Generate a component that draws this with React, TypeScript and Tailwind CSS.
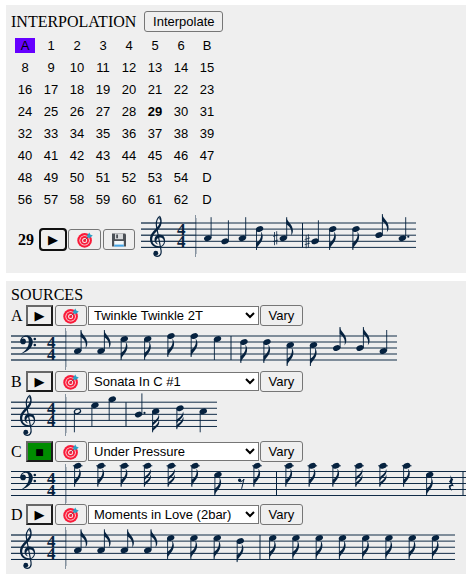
import React, { useState } from 'react';
import { clsx } from 'clsx';

type Clef = 'treble' | 'bass';
type NoteKind = 'half' | 'quarter' | 'eighth' | 'sixteenth';

interface NoteData {
  x: number;
  y: number;
  kind: NoteKind;
  up?: boolean;
  sharp?: boolean;
  dot?: boolean;
}

interface Rest {
  x: number;
  kind: 'eighth' | 'quarter';
}

interface Score {
  label: string;
  clef: Clef;
  width: number;
  height: number;
  bars: number[];
  notes: NoteData[];
  rests?: Rest[];
  top?: number;
  spacing?: number;
}

const INK = '#06223f';
const STEM = 21;

const run = (xs: number[], y: number, kind: NoteKind, up = false): NoteData[] =>
  xs.map((x) => ({ x, y, kind, up }));

const melody: Score = {
  label: 'Interpolated melody 29',
  clef: 'treble',
  width: 275,
  height: 44,
  top: 8,
  spacing: 6.1,
  bars: [161.5],
  notes: [
    { x: 66.7, y: 23.2, kind: 'quarter', up: true },
    { x: 84, y: 26.3, kind: 'quarter', up: true },
    { x: 101.3, y: 23.2, kind: 'quarter', up: true },
    { x: 118.6, y: 14, kind: 'eighth' },
    { x: 142.3, y: 23.2, kind: 'eighth', up: true, sharp: true },
    { x: 174, y: 26.3, kind: 'quarter', up: true, sharp: true },
    { x: 191.7, y: 14, kind: 'eighth' },
    { x: 215, y: 14, kind: 'eighth' },
    { x: 238, y: 20.1, kind: 'eighth', up: true },
    { x: 261.3, y: 23.2, kind: 'quarter', up: true, dot: true },
  ],
};

interface Source {
  id: string;
  title: string;
  playing?: boolean;
  score: Score;
}

const sources: Source[] = [
  {
    id: 'A',
    title: 'Twinkle Twinkle 2T',
    score: {
      label: 'Source A melody',
      clef: 'bass',
      width: 386,
      height: 43,
      bars: [220],
      notes: [
        ...run([66.7, 90], 23, 'eighth', true),
        ...run([113.3, 136.7], 11, 'eighth'),
        ...run([160, 183.3], 8, 'eighth'),
        { x: 206.5, y: 11, kind: 'quarter' },
        ...run([233, 256], 14, 'eighth'),
        ...run([279.3, 302.5], 17, 'eighth'),
        ...run([325.7, 349], 20, 'eighth', true),
        { x: 372.3, y: 23, kind: 'quarter', up: true },
      ],
    },
  },
  {
    id: 'B',
    title: 'Sonata In C #1',
    score: {
      label: 'Source B melody',
      clef: 'treble',
      width: 206,
      height: 47,
      top: 8.2,
      spacing: 6.07,
      bars: [115],
      notes: [
        { x: 66.5, y: 17.3, kind: 'half' },
        { x: 84, y: 11.2, kind: 'quarter' },
        { x: 101.3, y: 5.2, kind: 'quarter' },
        { x: 127.5, y: 20.4, kind: 'quarter', up: true, dot: true },
        { x: 144.7, y: 17.3, kind: 'sixteenth' },
        { x: 169, y: 14.2, kind: 'sixteenth' },
        { x: 192.3, y: 17.3, kind: 'quarter' },
      ],
    },
  },
  {
    id: 'C',
    title: 'Under Pressure',
    playing: true,
    score: {
      label: 'Source C melody',
      clef: 'bass',
      width: 468,
      height: 40,
      top: 7.5,
      spacing: 6,
      bars: [265.5, 452],
      notes: [
        ...run([66.7, 90, 113.3], 1.8, 'eighth'),
        ...run([136.5, 160.3], 1.8, 'sixteenth'),
        ...run([184], 1.8, 'eighth'),
        ...run([207], 10.7, 'eighth'),
        ...run([246, 278, 301.3, 325], 1.8, 'eighth'),
        ...run([348, 372], 1.8, 'sixteenth'),
        ...run([395.7], 1.8, 'eighth'),
        ...run([418.7], 10.7, 'eighth'),
      ],
      rests: [
        { x: 230, kind: 'eighth' },
        { x: 440, kind: 'quarter' },
      ],
    },
  },
  {
    id: 'D',
    title: 'Moments in Love (2bar)',
    score: {
      label: 'Source D melody',
      clef: 'treble',
      width: 444,
      height: 47,
      top: 8,
      spacing: 6.12,
      bars: [249],
      notes: [
        ...run([66.7, 90, 113.3, 136.7], 23.3, 'eighth', true),
        ...run([159.7, 183, 206.3], 11, 'eighth'),
        ...run([229.3], 14.1, 'eighth'),
        ...run([261.7, 285, 308.3, 331.5, 354.8, 378, 401.3, 424.5], 11, 'eighth'),
      ],
    },
  },
];

const TrebleClef = () => (
  <g>
    <path
      fill={INK}
      d="M18.6 .6C20.2 2 21 5 20.6 8C20.1 12 17.5 14.5 14.8 17.2C12.4 19.6 11 22 11.2 25C11.5 29 14.5 31.2 18 31.2C21.3 31.2 23 28.8 22.9 26.4C22.8 23.8 20.8 22.3 18.8 22.5C16.4 22.7 15 24.8 15.4 26.8C15.6 28 16.4 28.9 17.4 29.4C15.2 29 13.4 27.2 13.5 24.7C13.6 21.6 16 19.6 18.6 19.6C22 19.6 24.2 22.4 24.1 26C24 29.8 21.2 32.6 17.4 32.6C12.6 32.6 9 29 9 24.2C9 20 11.4 17.4 14 14.6C16.6 11.8 18.9 9.6 19.2 6.6C19.3 5 18.9 4.2 18.3 4.2Z"
    />
    <path
      fill="none"
      stroke={INK}
      strokeWidth="1.2"
      d="M18.6 1.4C16 3.6 14.9 8 15.6 11.8L20 35C20.7 39 19 41.3 16.4 41.3C14.8 41.3 13.4 40.4 13 39"
    />
    <circle cx="14.8" cy="38.2" r="2.4" fill={INK} />
  </g>
);

const BassClef = () => (
  <g fill={INK}>
    <path d="M9.2 13.2C9.6 9.8 12.2 7.6 15.4 7.6C19.2 7.6 21.8 10.2 21.8 13.8C21.8 19.6 16.6 24 9.6 26C14.6 23 17.8 19 17.8 13.8C17.8 10.6 16.8 8.8 14.6 8.8C12.4 8.8 10.6 10.6 10.6 12Z" />
    <circle cx="12.1" cy="13.4" r="2.8" />
    <circle cx="23.8" cy="11" r="1.3" />
    <circle cx="23.8" cy="17" r="1.3" />
  </g>
);

const Note = ({ x, y, kind, up, sharp, dot }: NoteData) => {
  const stemX = up ? x + 3.4 : x - 3.1;
  const stemEnd = up ? y - STEM : y + STEM;
  return (
    <g>
      {y < 4 && <path d={`M${x - 4.8} ${y}h9.6`} stroke={INK} strokeWidth="1" />}
      <ellipse
        cx={x}
        cy={y}
        rx={kind === 'half' ? 3.2 : 3.8}
        ry={kind === 'half' ? 2.2 : 2.7}
        transform={`rotate(-22 ${x} ${y})`}
        fill={kind === 'half' ? 'none' : INK}
        stroke={kind === 'half' ? INK : 'none'}
        strokeWidth="1.2"
      />
      <path d={`M${stemX} ${y}V${stemEnd}`} stroke={INK} strokeWidth="0.9" />
      {kind === 'eighth' && (
        <path
          transform={`translate(${stemX} ${stemEnd}) scale(1 ${up ? 1 : -1})`}
          fill={INK}
          d="M-.4 0C.6 4.5 6.4 7.5 6.2 13.5C6.1 15.5 5.4 17 4.4 18.4C5.4 14.5 4.6 10 -.4 7Z"
        />
      )}
      {kind === 'sixteenth' &&
        [0, 5.4].map((shift) => (
          <path
            key={shift}
            transform={`translate(${stemX} ${stemEnd - shift})`}
            fill={INK}
            d="M-.4 0C.6 -3.4 6.8 -5.4 6.6 -10.4C6.6 -11 6.4 -11.8 6.2 -12.4C5.6 -8.4 2.6 -6.4 -.4 -4.2Z"
          />
        ))}
      {sharp && (
        <path
          transform={`translate(${x - 7.7} ${y})`}
          fill="none"
          stroke={INK}
          strokeWidth="0.8"
          d="M-1.1 -6.2V7M1.1 -7V6.2M-2.6 -1.8L2.6 -3.4M-2.6 3.4L2.6 1.8"
        />
      )}
      {dot && <circle cx={x + 6} cy={y - 1.5} r="1.1" fill={INK} />}
    </g>
  );
};

const RestMark = ({ x, kind }: Rest) =>
  kind === 'eighth' ? (
    <g>
      <circle cx={x - 1.4} cy="16.2" r="1.6" fill={INK} />
      <path
        d={`M${x - 2} 17.4C${x} 18.4 ${x + 2} 17 ${x + 3} 15L${x + 0.6} 24.8`}
        fill="none"
        stroke={INK}
        strokeWidth="1"
      />
    </g>
  ) : (
    <path
      transform={`translate(${x} 11)`}
      fill={INK}
      d="M-1.2 0L2.2 4.6C.6 6.6 .8 8 2.8 11.2C.4 10.4 -.8 11.2 -.4 12.6C-.2 13.8 .4 14.8 1.2 16C-1.4 14.6 -2.8 12.4 -2 10.8C-1.6 9.8 -.6 9.6 .8 10L-2 6.4C0 4.4 .2 2.6 -1.2 0Z"
    />
  );

const Staff = ({ label, clef, width, height, bars, notes, rests = [], top = 8, spacing = 6 }: Score) => {
  const bottom = top + spacing * 4;
  return (
    <svg width={width} height={height} className="block shrink-0 overflow-visible" role="img" aria-label={label}>
      {[0, 1, 2, 3, 4].map((i) => (
        <g key={i} stroke={INK}>
          <path d={`M0 ${top + spacing * i}H${width}`} opacity="0.95" />
          <path d={`M0 ${top + spacing * i}H55`} opacity="0.5" />
        </g>
      ))}
      <path d="M54.5 0V42" stroke={INK} opacity="0.45" />
      <path d="M55.5 3V39" stroke={INK} opacity="0.25" />
      {clef === 'treble' ? <TrebleClef /> : <BassClef />}
      <g fill={INK} className="font-['Liberation_Serif',serif] text-[17px] font-bold">
        <text x="36" y="20">4</text>
        <text x="36" y="32">4</text>
      </g>
      {bars.map((x) => (
        <path key={x} d={`M${x} ${top}V${bottom}`} stroke={INK} strokeWidth="1" />
      ))}
      {notes.map((note) => (
        <Note key={note.x} {...note} />
      ))}
      {rests.map((rest) => (
        <RestMark key={rest.x} {...rest} />
      ))}
    </svg>
  );
};

const TargetIcon = () => (
  <svg width="16" height="16" viewBox="0 0 16 16" aria-hidden="true">
    <circle cx="7.6" cy="8.4" r="7.3" fill="#fa1a38" />
    <circle cx="7.6" cy="8.4" r="5.2" fill="#f7e9ea" />
    <circle cx="7.6" cy="8.4" r="4.4" fill="#fa1a38" />
    <circle cx="7.6" cy="8.4" r="2.5" fill="#f7e9ea" />
    <circle cx="7.6" cy="8.4" r="1.5" fill="#fa1a38" />
    <path d="M7.6 8.4L12 4" stroke="#7d4a58" strokeWidth="0.9" />
    <path d="M10 3.6L12.4 .4L13.2 2.6L15.8 3.4L12.8 6L10.6 5.6Z" fill="#2d9fc4" />
  </svg>
);

const SaveIcon = () => (
  <svg width="16" height="16" viewBox="0 0 16 16" aria-hidden="true">
    <path d="M1 1.6H14.2L15 2.4V14.6H1Z" fill="#4c5157" />
    <path d="M4 1.6H12V7.2H4Z" fill="#d8dadc" />
    <path d="M5.2 2.4H7V6.2H5.2Z" fill="#4c5157" />
    <path d="M3.2 9H12.8V14.6H3.2Z" fill="#f4f8fa" />
    <path d="M3.2 12.6H12.8V14.6H3.2Z" fill="#45a5e6" />
  </svg>
);

interface ToolButtonProps {
  label?: string;
  className?: string;
  onClick?: () => void;
  children: React.ReactNode;
}

const ToolButton = ({ label, className, onClick, children }: ToolButtonProps) => (
  <button
    type="button"
    aria-label={label}
    onClick={onClick}
    className={clsx(
      'flex h-[21px] shrink-0 items-center justify-center rounded-[3px] border border-[#767676] bg-[#efefef]',
      className
    )}
  >
    {children}
  </button>
);

const SourceRow = ({ source }: { source: Source }) => {
  const [playing, setPlaying] = useState(Boolean(source.playing));
  const [title, setTitle] = useState(source.title);

  return (
    <div>
      <div className="mb-0.5 flex h-[21px] items-center">
        <span className="w-[15px] shrink-0 font-['Liberation_Serif',serif] text-base leading-5">{source.id}</span>
        <button
          type="button"
          aria-label={playing ? `Stop ${source.id}` : `Play ${source.id}`}
          onClick={() => setPlaying(!playing)}
          className={clsx(
            "mr-0.5 flex h-[21px] w-[27px] shrink-0 items-center justify-center border-2 border-t-[#686868] border-r-[#1c1c1c] border-b-[#1c1c1c] border-l-[#686868] font-['DejaVu_Sans',sans-serif] leading-4",
            playing ? 'bg-[#008c00] text-[9px]' : 'bg-[#efefef] text-[13px]'
          )}
        >
          {playing ? '■' : '▶'}
        </button>
        <ToolButton label={`Target ${source.id}`} className="mr-px w-8">
          <TargetIcon />
        </ToolButton>
        <select
          aria-label={`Melody for source ${source.id}`}
          value={title}
          onChange={(e) => setTitle(e.target.value)}
          className="mr-px h-[19px] w-[171px] border border-[#767676] bg-white pl-px"
        >
          {sources.map((s) => (
            <option key={s.id}>{s.title}</option>
          ))}
        </select>
        <ToolButton className="w-[43px]">Vary</ToolButton>
      </div>
      <Staff {...source.score} />
    </div>
  );
};

const cornerNames: Record<number, string> = { 0: 'A', 7: 'B', 55: 'D', 63: 'D' };

const App = () => {
  const [selected, setSelected] = useState(29);

  return (
    <main className="flex flex-col gap-2 overflow-hidden bg-white pt-[5px] pl-1.5 font-['Liberation_Sans',sans-serif] text-[13px] leading-[15px] text-black">
      <section className="bg-[#efefef] pt-1.5 pb-3.5 pl-[5px]">
        <div className="flex items-center gap-2">
          <h2 className="font-['Liberation_Serif',serif] text-base leading-5">INTERPOLATION</h2>
          <ToolButton className="w-[79px]">Interpolate</ToolButton>
        </div>
        <div className="mt-1.5 ml-1 grid w-fit grid-cols-8 gap-x-1.5 gap-y-[7px]">
          {Array.from({ length: 64 }, (_, i) => (
            <button
              key={i}
              type="button"
              onClick={() => setSelected(i)}
              className={clsx('h-[15px] w-5 text-center', i === 0 && 'bg-[#6600ff]', i === selected && 'font-bold')}
            >
              {cornerNames[i] ?? i}
            </button>
          ))}
        </div>
        <div className="mt-2 flex items-start">
          <div className="mt-3.5 mr-1.5 ml-[7px] flex items-center gap-0.5">
            <span className="mr-1 w-4 font-['Liberation_Serif',serif] text-base leading-5 font-bold">{selected}</span>
            <ToolButton
              label="Play melody"
              className="w-[26px] font-['DejaVu_Sans',sans-serif] leading-4 outline-2 -outline-offset-1 outline-[#101010]"
            >
              ▶
            </ToolButton>
            <ToolButton label="Target melody" className="w-[33px]">
              <TargetIcon />
            </ToolButton>
            <ToolButton label="Save melody" className="w-8">
              <SaveIcon />
            </ToolButton>
          </div>
          <Staff {...melody} />
        </div>
      </section>

      <section className="bg-[#eeeeee] pt-1 pl-[5px]">
        <h2 className="font-['Liberation_Serif',serif] text-base leading-5">SOURCES</h2>
        {sources.map((source) => (
          <SourceRow key={source.id} source={source} />
        ))}
      </section>
    </main>
  );
};

export default App;
